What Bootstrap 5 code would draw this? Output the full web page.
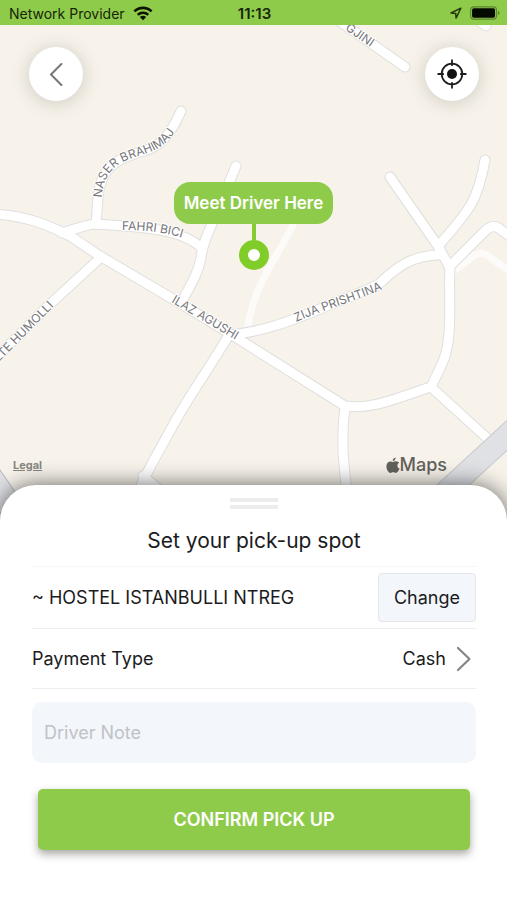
<!DOCTYPE html>
<html lang="en">
<head>
<meta charset="utf-8">
<meta name="viewport" content="width=device-width, initial-scale=1">
<title>Set your pick-up spot</title>
<link href="https://cdn.jsdelivr.net/npm/bootstrap@5.3.0/dist/css/bootstrap.min.css" rel="stylesheet">
<style>
  body { font-family: Inter, "Liberation Sans", sans-serif; color: #1b1b1d; background: #fff; }
  .status-bar { background: #8fcb4a; color: #17250a; font-size: 14px; line-height: 25px; padding: 1px 7px 0 9px; height: 25px; }
  .status-bar > * { flex: 1 1 0; }
  .status-bar time { flex: 0 0 auto; font-weight: 600; font-size: 15px; }
  .map-area { background: #f7f3eb; padding-bottom: 53px; min-height: 505px; overflow: hidden; }
  .map-controls { padding: 22px 28px 0 29px; }
  .map-canvas { z-index: 0; }
  .map-canvas .edge { stroke: #dfdfde; stroke-width: 11; }
  .map-canvas .fill { stroke: #fff; stroke-width: 9; }
  .map-canvas text { font-size: 12px; fill: #77767a; stroke: #fff; stroke-width: 2px; paint-order: stroke; }
  .round-btn { width: 54px; height: 54px; background: #fff; box-shadow: 0 2px 18px rgba(80, 80, 60, .25); }
  .pin-area { margin-top: 81px; }
  .pin-label { background: #8fcb4a; color: #fff; font-size: 17px; font-weight: 600; line-height: 42px; border-radius: 16px; padding: 0 10px; }
  .pin-stem { width: 4px; height: 16px; background: #84cc30; }
  .pin-ring { width: 30px; height: 30px; border: 9px solid #80cc28; background: #fff; }
  .map-credit { padding: 0 60px 0 13px; color: #62625c; }
  .map-credit a { font-size: 11px; font-weight: 700; color: #87867f; }
  .map-credit .brand { font-size: 18px; line-height: 24px; font-weight: 500; }
  .sheet { margin-top: -45px; background: #fff; border-radius: 36px 36px 0 0; padding: 13px 31px 40px 32px; box-shadow: 0 0 22px rgba(0, 0, 0, .6); }
  .grip { width: 48px; height: 11px; border-top: 4px solid #ececec; border-bottom: 4px solid #ececec; }
  .sheet h1 { font-size: 21px; line-height: 30px; font-weight: 400; margin: 17px 0 10px; }
  .sheet-row { border-bottom: 1px solid #efeff0; font-size: 18px; }
  .place-row { border-top: 1px solid #f6f6f6; height: 63px; }
  .pay-row { height: 60px; }
  .change-btn { width: 98px; height: 49px; font-size: 18px; padding: 0; color: #1b1b1d; background: #f3f6fa; border: 1px solid #e4e6e9; border-radius: 4px; }
  .note-input { height: 61px; margin-top: 13px; padding: 0 12px; font-size: 18px; background: #f3f6fa; border: 0; border-radius: 10px; }
  .note-input::placeholder { color: #bfc2c8; }
  .confirm-wrap { padding: 26px 6px 0; }
  .confirm-btn { height: 61px; font-size: 18px; font-weight: 600; color: #fff; background: #8fcb4a; border: 0; border-radius: 5px; box-shadow: 0 4px 9px rgba(50, 45, 35, .42); }
</style>
<script src="https://cdn.jsdelivr.net/npm/bootstrap@5.3.0/dist/js/bootstrap.bundle.min.js"></script>
</head>
<body>
<header class="status-bar d-flex align-items-center">
  <div class="d-flex align-items-center gap-2">
    <span class="text-nowrap">Network Provider</span>
    <svg width="20" height="15" viewBox="0 0 20 15" fill="none" stroke="#0b1403" stroke-width="2.6" aria-hidden="true">
      <path d="M1.4 5.4C6.2.7 13.8.7 18.6 5.4M4.7 8.9c3-2.8 7.6-2.8 10.6 0"/>
      <path d="M10 14.2 6.8 11c1.8-1.6 4.6-1.6 6.4 0z" fill="#0b1403" stroke="none"/>
    </svg>
  </div>
  <time>11:13</time>
  <div class="d-flex align-items-center justify-content-end gap-2">
    <svg width="12" height="12" viewBox="0 0 12 12" fill="none" stroke="#243810" stroke-width="1.5" stroke-linejoin="round" aria-hidden="true"><path d="M10.8 1.2 1 6l4.7.4.4 4.7z"/></svg>
    <svg width="30" height="14" viewBox="0 0 29 13" aria-hidden="true">
      <rect x=".6" y=".6" width="25" height="11.8" rx="3" fill="none" stroke="#5c8430" stroke-width="1.1"/>
      <rect x="2" y="2" width="22.2" height="9" rx="1.6" fill="#050a00"/>
      <path d="M27 4.4c2 .8 2 3.4 0 4.2z" fill="#5c8430"/>
    </svg>
  </div>
</header>

<main>
  <section class="map-area position-relative d-flex flex-column" aria-label="Map">
    <svg class="map-canvas position-absolute top-0 start-0 w-100 h-100" viewBox="0 25 507 505" preserveAspectRatio="xMidYMin slice" fill="none" stroke-linecap="round" stroke-linejoin="round" aria-hidden="true">
      <defs>
        <g id="roads">
          <path d="M-8 214C26 215 50 226 70 236L100 256L178 302L232 335L345 406C372 410 396 398 431 387L488 439"/>
          <path d="M62 233C78 228 88 224 96 224L125 226C162 229 185 233 202 248"/>
          <path d="M96 224L98 197C101 167 116 160 137 153C160 148 170 136 181 111"/>
          <path d="M236 166L206 238C204 244 202 250 201 257C199 271 191 285 181 303"/>
          <path d="M98 260L48 306L-8 362"/>
          <path d="M229 335C208 370 190 395 176 420C162 446 150 465 138 492M143 476L162 492"/>
          <path d="M229 335C262 332 288 322 320 309C350 296 368 291 380 283C400 264 414 256 438 255"/>
          <path d="M390 177L438 246L450 268C448 298 454 338 442 364L431 387"/>
          <path d="M485 160C478 200 470 210 439 245M450 266L486 230Q494 223 501 230L516 240"/>
          <path d="M345 407C341 440 343 460 347 492"/>
          <path d="M328 13L405 67M480 22L486 26"/>
        </g>
        <path id="t-naser" d="M102 198C103 176 112 166 130 159C150 152 164 150 176 130"/>
        <path id="t-fahri" d="M122 230C152 230 172 233 199 244"/>
        <path id="t-humolli" d="M-20 380L-5 366L54 306"/>
        <path id="t-ilaz" d="M171 302L244 345"/>
        <path id="t-zija" d="M296 322C330 307 355 302 390 286"/>
        <path id="t-gjini" d="M331 20L385 57"/>
      </defs>
      <g stroke="#fcfbf9" stroke-width="7"><path d="M293 225C282 250 252 285 247 332M450 274L475 255Q482 251 488 256L512 273"/></g>
      <use href="#roads" class="edge"/>
      <use href="#roads" class="fill"/>
      <g stroke-linecap="butt">
        <path d="M528 416L438 499" stroke="#c6c8ca" stroke-width="23"/><path d="M528 416L438 499" stroke="#dfe1e5" stroke-width="21"/>
        <path d="M-20 462L26 529" stroke="#b9bbbe" stroke-width="25"/><path d="M-20 462L26 529" stroke="#dfe1e5" stroke-width="23"/>
      </g>
      <g>
        <text><textPath href="#t-naser">NASER BRAHIMAJ</textPath></text>
        <text><textPath href="#t-fahri">FAHRI BICI</textPath></text>
        <text text-anchor="end"><textPath href="#t-humolli" startOffset="100%">LTE HUMOLLI</textPath></text>
        <text><textPath href="#t-ilaz">ILAZ AGUSHI</textPath></text>
        <text><textPath href="#t-zija">ZIJA PRISHTINA</textPath></text>
        <text text-anchor="end"><textPath href="#t-gjini" startOffset="48">GJINI</textPath></text>
      </g>
    </svg>
    <div class="map-controls position-relative d-flex justify-content-between">
      <button type="button" class="round-btn btn rounded-circle border-0 p-0 d-flex align-items-center justify-content-center" aria-label="Back">
        <svg width="14" height="24" viewBox="0 0 14 24" fill="none" stroke="#77777a" stroke-width="2" stroke-linecap="round" stroke-linejoin="round"><path d="M12.4 2 2 12.5 12.4 23"/></svg>
      </button>
      <button type="button" class="round-btn btn rounded-circle border-0 p-0 d-flex align-items-center justify-content-center" aria-label="Locate me">
        <svg width="30" height="30" viewBox="0 0 30 30" fill="none" stroke="#1d1d1f" stroke-width="1.8" stroke-linecap="round"><circle cx="15" cy="15" r="10.3"/><circle cx="15" cy="15" r="5" fill="#111" stroke="none"/><path d="M15 1.2v5M15 23.8v5M1.2 15h5M23.8 15h5"/></svg>
      </button>
    </div>
    <div class="pin-area position-relative d-flex flex-column align-items-center">
      <div class="pin-label text-nowrap">Meet Driver Here</div>
      <div class="pin-stem"></div>
      <div class="pin-ring rounded-circle"></div>
    </div>
    <div class="map-credit position-relative d-flex justify-content-between align-items-center mt-auto">
      <a href="#legal">Legal</a>
      <span class="brand d-flex align-items-center">
        <svg width="14" height="17" viewBox="0 0 14 17" fill="#62625c" aria-hidden="true"><path d="M9.7.5c.1 1.9-1.3 3.4-3 3.5C6.5 2.2 8 .7 9.7.5zM7 4.9c.6 0 1.7-.8 3.2-.7 1.3.1 2.300.6 2.900 1.500-2.500 1.500-2.100 4.800.5 5.900-.6 1.600-2 4.300-3.600 4.300-1.100 0-1.500-.7-2.800-.7s-1.800.7-2.800.7C2.500 16 .4 12.600.4 9.300c0-3.200 2-4.900 4-4.900 1.200 0 2 .5 2.600.5z"/></svg>Maps
      </span>
    </div>
  </section>

  <section class="sheet position-relative">
    <div class="grip mx-auto"></div>
    <h1 class="text-center">Set your pick-up spot</h1>
    <div class="sheet-row place-row d-flex align-items-center justify-content-between">
      <span>~ HOSTEL ISTANBULLI NTREG</span>
      <button type="button" class="change-btn btn">Change</button>
    </div>
    <div class="sheet-row pay-row d-flex align-items-center justify-content-between">
      <span>Payment Type</span>
      <a href="#payment" class="d-flex align-items-center text-reset text-decoration-none gap-2 pe-1">Cash
        <svg width="18" height="26" viewBox="0 0 18 26" fill="none" stroke="#858588" stroke-width="2.2" stroke-linecap="round" stroke-linejoin="round" aria-hidden="true"><path d="M4 2 15.5 13 4 24"/></svg>
      </a>
    </div>
    <input type="text" class="note-input form-control" placeholder="Driver Note" aria-label="Driver Note">
    <div class="confirm-wrap">
      <button type="button" class="confirm-btn btn w-100">CONFIRM PICK UP</button>
    </div>
  </section>
</main>
</body>
</html>
